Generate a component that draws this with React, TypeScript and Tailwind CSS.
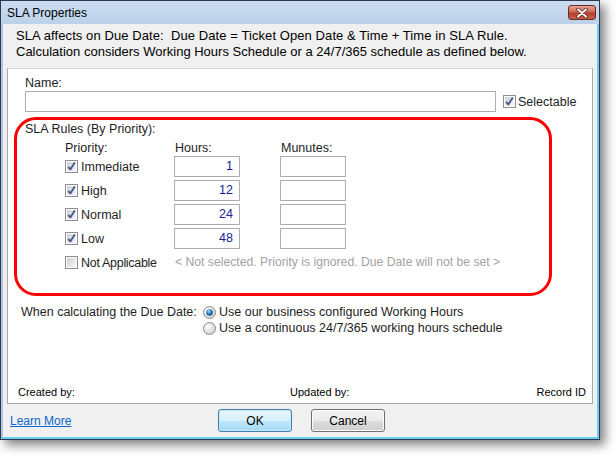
import React from "react";

function Check({ checked, className = "" }: { checked: boolean; className?: string }) {
  return (
    <svg width="13" height="13" viewBox="0 0 13 13" className={"shrink-0 " + className}>
      <defs>
        <linearGradient id="cbg" x1="0" y1="0" x2="1" y2="1">
          <stop offset="0" stopColor="#cdd1d6" />
          <stop offset="1" stopColor="#f7f7f7" />
        </linearGradient>
      </defs>
      <rect x="0.5" y="0.5" width="12" height="12" fill="#fdfdfd" stroke="#8e8f8f" />
      <rect x="2" y="2" width="9" height="9" fill="url(#cbg)" />
      {checked && (
        <path d="M3.2 6.8 L5.3 9.4 L9.8 2.6" stroke="#4a5c8e" strokeWidth="1.9" fill="none" strokeLinejoin="round" />
      )}
    </svg>
  );
}

function Radio({ checked }: { checked: boolean }) {
  return (
    <svg width="13" height="13" viewBox="0 0 13 13" className="shrink-0">
      <defs>
        <radialGradient id="rbg" cx="0.35" cy="0.35" r="0.8">
          <stop offset="0" stopColor="#ffffff" />
          <stop offset="1" stopColor="#c9c9c9" />
        </radialGradient>
        <radialGradient id="rdot" cx="0.4" cy="0.35" r="0.7">
          <stop offset="0" stopColor="#a8e2ff" />
          <stop offset="0.5" stopColor="#2c7fc2" />
          <stop offset="1" stopColor="#134a80" />
        </radialGradient>
      </defs>
      <circle cx="6.5" cy="6.5" r="6" fill="url(#rbg)" stroke="#8a8a8a" />
      {checked && <circle cx="6.5" cy="6.5" r="3.3" fill="url(#rdot)" />}
    </svg>
  );
}

const rows = [
  { label: "Immediate", hours: "1", checked: true },
  { label: "High", hours: "12", checked: true },
  { label: "Normal", hours: "24", checked: true },
  { label: "Low", hours: "48", checked: true },
];

export default function App() {
  return (
    <div className="w-[616px] h-[456px] bg-white font-['Liberation_Sans',Arial,sans-serif] text-[12.5px] text-[#1e1e1e]">
      <div className="w-[600px] h-[440px] border border-[#2a3b4f] bg-[#bfd3ea] flex flex-col shadow-[5px_5px_10px_rgba(0,0,0,0.5)]">
        {/* title bar */}
        <div className="h-[23px] shrink-0 flex items-start bg-[linear-gradient(#cadcf0,#bcd2ea)]">
          <div className="pl-[6px] pt-[4px] leading-[16px] text-[12px] text-black">SLA Properties</div>
          <div className="ml-auto mr-[3px] mt-[4px] w-[28px] h-[15px] rounded-[3px] border border-[#6e2a22] bg-[linear-gradient(#e3a294,#cf6a57_45%,#b5402c_55%,#c8604a)] flex items-center justify-center">
            <svg width="12" height="10" viewBox="0 0 12 10">
              <path d="M2 1.5 L10 8.5 M10 1.5 L2 8.5" stroke="#5a2620" strokeWidth="3.6" strokeLinecap="round" />
              <path d="M2 1.5 L10 8.5 M10 1.5 L2 8.5" stroke="#ffffff" strokeWidth="2" strokeLinecap="round" />
            </svg>
          </div>
        </div>
        {/* content */}
        <div className="flex-1 flex flex-col bg-[#f0f0f0] border-l-2 border-r-2 border-b-2 border-l-[#aec6e2] border-r-[#6ccdef] border-b-[#6ccdef]">
          <div className="h-[44px] shrink-0 pl-[13px] pt-[4px] text-[13px] leading-[16px] text-black">
            <div className="tracking-[0.08px]">SLA affects on Due Date:&nbsp; Due Date = Ticket Open Date &amp; Time + Time in SLA Rule.</div>
            <div>Calculation considers Working Hours Schedule or a 24/7/365 schedule as defined below.</div>
          </div>
          {/* panel */}
          <div className="h-[336px] shrink-0 mx-[4px] bg-white border border-[#a9a9a9] border-t-[#d5d5d5] flex flex-col">
            <div className="pl-[17px]">
              <div className="h-[14px] mt-[7px] leading-[14px]">Name:</div>
              <div className="mt-[1px] flex items-center">
                <div className="w-[471px] h-[21px] border border-[#abadb3] bg-white" />
                <Check checked className="ml-[7px]" />
                <span className="ml-[2px] leading-[14px]">Selectable</span>
              </div>
            </div>
            {/* red box */}
            <div className="ml-[6px] mt-[5px] w-[538px] h-[179px] shrink-0 border-[3px] border-[#ff0000] rounded-[22px] pl-[8px] pt-[2px]">
              <div className="h-[14px] leading-[14px]">SLA Rules (By Priority):</div>
              <div className="ml-[40px] mt-[5px] grid grid-cols-[109px_66px_66px] gap-x-0">
                <div className="h-[15px] leading-[14px]">Priority:</div>
                <div className="h-[15px] leading-[14px] pl-[1px]">Hours:</div>
                <div className="h-[15px] leading-[14px] pl-[1px] ml-[40px] w-[80px]">Munutes:</div>
                {rows.map((r) => (
                  <React.Fragment key={r.label}>
                    <div className="h-[24px] flex items-center pb-[3px]">
                      <Check checked={r.checked} />
                      <span className="ml-[3px] leading-[14px]">{r.label}</span>
                    </div>
                    <div className="h-[24px] pb-[3px]">
                      <div className="h-[21px] border border-[#abadb3] text-right pr-[6px] leading-[19px] text-[#1c1c96]">{r.hours}</div>
                    </div>
                    <div className="h-[24px] pb-[3px] ml-[40px]">
                      <div className="w-[66px] h-[21px] border border-[#abadb3]" />
                    </div>
                  </React.Fragment>
                ))}
                <div className="h-[21px] flex items-center">
                  <Check checked={false} />
                  <span className="ml-[3px] leading-[14px] tracking-[-0.3px]">Not Applicable</span>
                </div>
                <div className="col-span-2 h-[21px] flex items-center pl-[1px] whitespace-nowrap text-[12.2px] text-[#a3a3a3]">
                  &lt; Not selected. Priority is ignored. Due Date will not be set &gt;
                </div>
              </div>
            </div>
            {/* radio */}
            <div className="mt-[8px] pl-[13px] flex">
              <div className="w-[182px] h-[16px] leading-[16px]">When calculating the Due Date:</div>
              <div className="flex flex-col">
                <div className="h-[16px] flex items-center">
                  <Radio checked />
                  <span className="ml-[3px] leading-[14px]">Use our business configured Working Hours</span>
                </div>
                <div className="h-[16px] flex items-center">
                  <Radio checked={false} />
                  <span className="ml-[3px] leading-[14px]">Use a continuous 24/7/365 working hours schedule</span>
                </div>
              </div>
            </div>
            {/* footer */}
            <div className="mt-auto mb-[4px] pl-[10px] pr-[6px] flex text-[11px] leading-[13px] text-black">
              <div className="w-[272px]">Created by:</div>
              <div>Updated by:</div>
              <div className="flex-1 text-right">Record ID</div>
            </div>
          </div>
          {/* bottom bar */}
          <div className="flex-1 flex items-center pl-[7px]">
            <a className="w-[208px] text-[12px] text-[#0b66cc] underline leading-[14px]">Learn More</a>
            <button className="w-[74px] h-[23px] rounded-[3px] border border-[#3c7fb1] bg-[linear-gradient(#eaf6fd,#d9f0fc_50%,#bee6fd_50%,#a7d9f5)] text-[12px] text-black shadow-[inset_0_0_0_1px_#c8e8fa]">
              OK
            </button>
            <button className="ml-[19px] w-[74px] h-[23px] rounded-[3px] border border-[#707070] bg-[linear-gradient(#f2f2f2,#ebebeb_50%,#dddddd_50%,#cfcfcf)] text-[12px] text-black shadow-[inset_0_0_0_1px_#fcfcfc]">
              Cancel
            </button>
          </div>
        </div>
      </div>
    </div>
  );
}
